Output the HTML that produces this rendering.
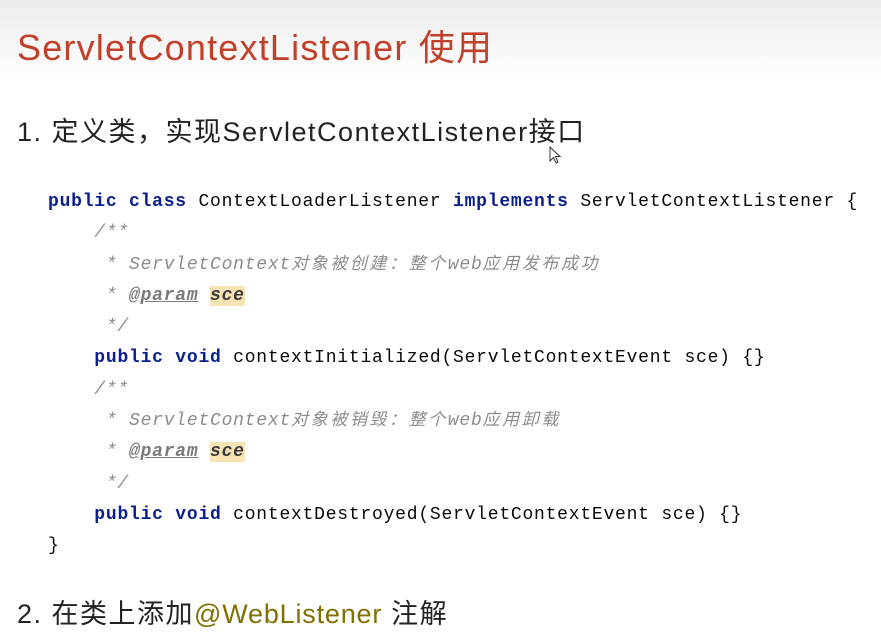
<!DOCTYPE html>
<html><head><meta charset="utf-8">
<style>
html,body{margin:0;padding:0}
body{width:881px;height:642px;position:relative;overflow:hidden;background:#fff;
 font-family:"Liberation Sans","Noto Sans CJK SC",sans-serif}
.top{position:absolute;left:0;top:0;width:881px;height:80px;background:linear-gradient(#ececec,#fff)}
.title{position:absolute;left:17px;top:19px;font-size:36px;color:#c0402a;white-space:nowrap;letter-spacing:1.2px}
.h{position:absolute;left:17px;font-size:27px;color:#222;white-space:nowrap;letter-spacing:1.5px}
.code{position:absolute;left:48px;top:187px;font-family:"Liberation Mono","Noto Sans CJK SC",monospace;
 font-size:18px;letter-spacing:0.77px;line-height:31.3px;color:#080808;white-space:pre}
.k{color:#0a1f8f;font-weight:bold}
.c{color:#8c8c8c;font-style:italic}
.cj{font-size:17px;letter-spacing:2.6px}
.t{color:#7a7a7a;font-weight:bold;text-decoration:underline}
.s{background:#f7e3b4;font-weight:bold;font-style:italic;color:#3a3a3a}
.ann{color:#7f7000;letter-spacing:0.8px}
</style></head><body>
<div class="top"></div>
<div class="title">ServletContextListener 使用</div>
<div class="h" style="top:110px">1. 定义类，实现ServletContextListener接口</div>
<svg style="position:absolute;left:549px;top:146px" width="14" height="20" viewBox="0 0 14 20"><path d="M1 1 L1 15 L4.5 11.5 L7 17 L9 16 L6.5 10.5 L11 10.5 Z" fill="#fff" stroke="#333" stroke-width="1"/></svg>
<div class="code"><span class="k">public class</span> ContextLoaderListener <span class="k">implements</span> ServletContextListener {
    <span class="c">/**</span>
<span class="c">     * ServletContext<span class="cj">对象被创建：整个</span>web<span class="cj">应用发布成功</span></span>
<span class="c">     * <span class="t">@param</span> <span class="s">sce</span></span>
<span class="c">     */</span>
    <span class="k">public void</span> contextInitialized(ServletContextEvent sce) {}
    <span class="c">/**</span>
<span class="c">     * ServletContext<span class="cj">对象被销毁：整个</span>web<span class="cj">应用卸载</span></span>
<span class="c">     * <span class="t">@param</span> <span class="s">sce</span></span>
<span class="c">     */</span>
    <span class="k">public void</span> contextDestroyed(ServletContextEvent sce) {}
}</div>
<div class="h" style="top:592px">2. 在类上添加<span class="ann">@WebListener</span> 注解</div>
</body></html>
